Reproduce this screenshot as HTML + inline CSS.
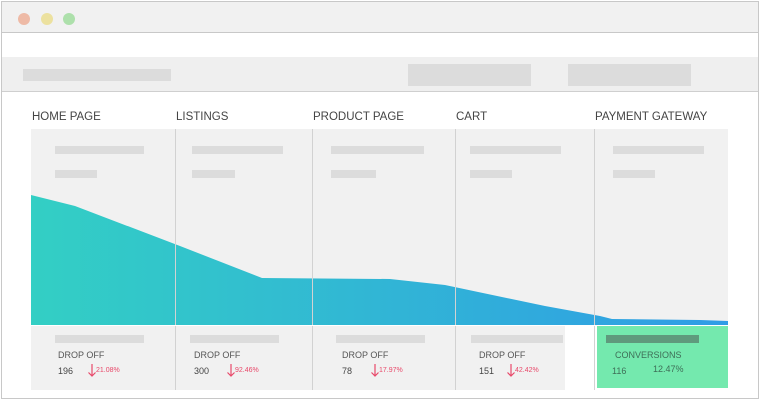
<!DOCTYPE html>
<html><head><style>
body{margin:0;width:760px;height:400px;background:#fff;position:relative;overflow:hidden;font-family:"Liberation Sans",sans-serif}
div{position:absolute;box-sizing:border-box}
.p{background:#dcdcdc}
.t{font-size:11.5px;color:#444;top:111px}
.d{font-size:9px;color:#555;top:350px}
.n{font-size:9px;color:#444;top:366px}
.r{font-size:7px;color:#e8496a;top:367px}
.v{width:1px;background:#d2d2d2;top:129px;height:261px}
.a{position:absolute;top:363px}
</style></head><body>
<div style="left:1px;top:1px;width:758px;height:398px;border:1px solid #c8c8c8"></div>
<div style="left:2px;top:2px;width:756px;height:31px;background:#f1f1f1;border-bottom:1px solid #c8c8c8"></div>
<div style="left:18px;top:13px;width:12px;height:12px;border-radius:6px;background:#eebaa6"></div>
<div style="left:41px;top:13px;width:12px;height:12px;border-radius:6px;background:#ece19f"></div>
<div style="left:63px;top:13px;width:12px;height:12px;border-radius:6px;background:#ade0ab"></div>
<div style="left:2px;top:57px;width:756px;height:35px;background:#efefef;border-bottom:1px solid #cfcfcf"></div>
<div class="p" style="left:23px;top:69px;width:148px;height:12px"></div>
<div class="p" style="left:408px;top:64px;width:123px;height:22px"></div>
<div class="p" style="left:568px;top:64px;width:123px;height:22px"></div>
<div class="t" style="left:32px">HOME PAGE</div>
<div class="t" style="left:176px">LISTINGS</div>
<div class="t" style="left:313px">PRODUCT PAGE</div>
<div class="t" style="left:456px">CART</div>
<div class="t" style="left:595px">PAYMENT GATEWAY</div>
<div style="left:31px;top:129px;width:697px;height:196px;background:#f1f1f1"></div>
<div style="left:31px;top:326px;width:534px;height:64px;background:#f1f1f1"></div>
<div style="left:597px;top:326px;width:131px;height:62px;background:#74e9ae"></div>
<svg style="position:absolute;left:0;top:0" width="760" height="400">
<defs><linearGradient id="g" x1="31" x2="728" y1="0" y2="0" gradientUnits="userSpaceOnUse"><stop offset="0" stop-color="#33cfc4"/><stop offset="1" stop-color="#2f9ce6"/></linearGradient></defs>
<polygon fill="url(#g)" points="31,195 75,206 180,246 262,278 390,279 445,285 545,306 600,316 612,319 700,320 728,321 728,325 31,325"/>
<g stroke="#e8496a" stroke-width="1.2" fill="none">
<path d="M92,364V376M88.5,372.5L92,376L95.5,372.5"/>
<path d="M231,364V376M227.5,372.5L231,376L234.5,372.5"/>
<path d="M375,364V376M371.5,372.5L375,376L378.5,372.5"/>
<path d="M511,364V376M507.5,372.5L511,376L514.5,372.5"/>
</g>
</svg>
<div class="v" style="left:175px"></div>
<div class="v" style="left:312px"></div>
<div class="v" style="left:455px"></div>
<div class="v" style="left:594px"></div>
<div style="left:31px;top:325px;width:697px;height:1px;background:#fff"></div>
<div class="p" style="left:55px;top:146px;width:89px;height:8px"></div><div class="p" style="left:55px;top:170px;width:42px;height:8px"></div>
<div class="p" style="left:192px;top:146px;width:91px;height:8px"></div><div class="p" style="left:192px;top:170px;width:43px;height:8px"></div>
<div class="p" style="left:331px;top:146px;width:93px;height:8px"></div><div class="p" style="left:331px;top:170px;width:45px;height:8px"></div>
<div class="p" style="left:470px;top:146px;width:91px;height:8px"></div><div class="p" style="left:470px;top:170px;width:42px;height:8px"></div>
<div class="p" style="left:613px;top:146px;width:91px;height:8px"></div><div class="p" style="left:613px;top:170px;width:42px;height:8px"></div>
<div class="p" style="left:55px;top:335px;width:89px;height:8px"></div>
<div class="p" style="left:190px;top:335px;width:89px;height:8px"></div>
<div class="p" style="left:336px;top:335px;width:89px;height:8px"></div>
<div class="p" style="left:471px;top:335px;width:92px;height:8px"></div>
<div style="left:606px;top:335px;width:93px;height:8px;background:#5f9a7d"></div>
<div class="d" style="left:58px">DROP OFF</div><div class="n" style="left:58px">196</div><div class="r" style="left:96px">21.08%</div>
<div class="d" style="left:194px">DROP OFF</div><div class="n" style="left:194px">300</div><div class="r" style="left:235px">92.46%</div>
<div class="d" style="left:342px">DROP OFF</div><div class="n" style="left:342px">78</div><div class="r" style="left:379px">17.97%</div>
<div class="d" style="left:479px">DROP OFF</div><div class="n" style="left:479px">151</div><div class="r" style="left:515px">42.42%</div>
<div class="d" style="left:615px;color:#3e6e57">CONVERSIONS</div><div class="n" style="left:612px;color:#3e6e57;top:366px">116</div><div class="n" style="left:653px;top:364px;color:#3e6e57">12.47%</div>
</body></html>
